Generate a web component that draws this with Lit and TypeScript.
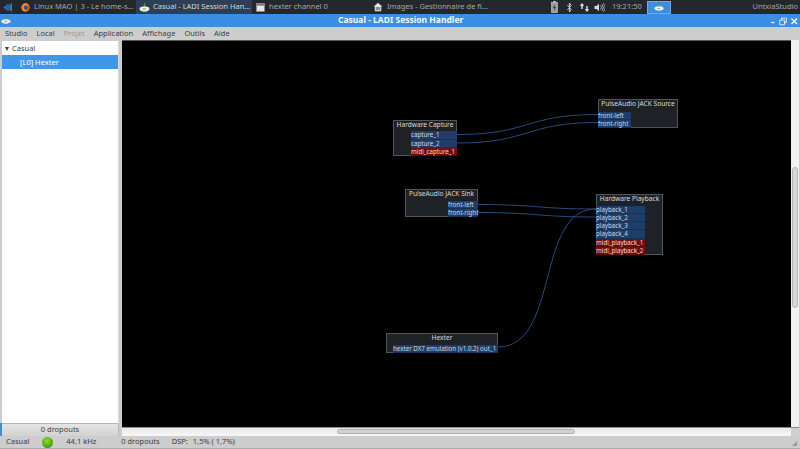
import { LitElement, html, css, svg } from "lit";
import { customElement } from "lit/decorators.js";

type Port = { name: string; midi?: boolean };
type Node = { title: string; x: number; y: number; w: number; h: number; pw: number; side: "l" | "r"; ports: Port[] };

const OX = 122, OY = 40;
const nodes: Node[] = [
  { title: "Hardware Capture", x: 393, y: 120, w: 64, h: 36, pw: 46, side: "r", ports: [{ name: "capture_1" }, { name: "capture_2" }, { name: "midi_capture_1", midi: true }] },
  { title: "PulseAudio JACK Source", x: 598, y: 99, w: 80, h: 29, pw: 33, side: "l", ports: [{ name: "front-left" }, { name: "front-right" }] },
  { title: "PulseAudio JACK Sink", x: 405, y: 189, w: 73, h: 28, pw: 30, side: "r", ports: [{ name: "front-left" }, { name: "front-right" }] },
  { title: "Hardware Playback", x: 596, y: 194, w: 67, h: 61, pw: 49, side: "l", ports: [{ name: "playback_1" }, { name: "playback_2" }, { name: "playback_3" }, { name: "playback_4" }, { name: "midi_playback_1", midi: true }, { name: "midi_playback_2", midi: true }] },
  { title: "Hexter", x: 386, y: 333, w: 112, h: 20, pw: 105, side: "r", ports: [{ name: "hexter DX7 emulation (v1.0.2) out_1" }] },
];

const wires = [
  "M457 134.5 C530 134.5 525 114.5 598 114.5",
  "M457 143 C530 143 525 122.5 598 122.5",
  "M478 204.5 C537 204.5 537 209 596 209",
  "M478 212.5 C537 212.5 537 217 596 217",
  "M498 347 C560 347 535 209 596 209",
];

const bowl = (s: number) => html`<svg class="ico" width=${s} height=${s} viewBox="0 0 12 12">
  <path d="M5.4 1h1.2v3H5.4z" fill="#3f9a35"/><path d="M3.5 5.2 6 3.4l2.5 1.8z" fill="#4fae3c"/>
  <ellipse cx="6" cy="7.6" rx="5.4" ry="2.6" fill="#f2f2ee"/><path d="M4 7.6h3.4" stroke="#4fae3c" stroke-width="1"/>
  <path d="M3.5 10h5" stroke="#cfcfcf"/></svg>`;

@customElement("app-root")
export class AppRoot extends LitElement {
  static styles = css`
    :host { display: flex; flex-direction: column; width: 800px; height: 449px; overflow: hidden; background: #cdcdcd;
      font-family: "Noto Sans", "Open Sans", sans-serif; font-size: 7.5px; color: #3c3c3c; line-height: 1; }
    .ico { display: block; flex: none; }
    .panel { height: 14px; flex: none; background: #24282c; color: #a4a7aa; display: flex; align-items: center; position: relative; }
    .logo { margin-left: 3px; width: 18px; }
    .task { display: flex; align-items: center; gap: 4px; height: 14px; white-space: nowrap; overflow: hidden; flex: none; box-sizing: border-box; }
    .t1 { width: 115px; }
    .t2 { width: 116px; background: #2c3f54; color: #d5d8da; padding-left: 3px; gap: 3px; }
    .t3 { width: 121px; padding-left: 4px; }
    .t4 { width: 178px; }
    .tray { display: flex; align-items: center; flex: none; }
    .clock { margin-left: 7px; width: 35px; }
    .show { width: 24px; height: 13px; background: #3d8ee3; border: 1px solid #7aa9d6; box-sizing: border-box; display: flex; align-items: center; justify-content: center; }
    .user { position: absolute; right: 2px; top: 3px; }
    .title { height: 13px; flex: none; background: #3b8ee5; color: #f4f8fc; font-size: 8.5px; font-weight: 700; display: flex; align-items: center; position: relative; padding-left: 338px; box-sizing: border-box; }
    .title .lead { position: absolute; left: 1px; top: 1px; }
    .btns { position: absolute; right: 1px; top: 3px; display: flex; gap: 3px; }
    .menu { height: 13px; flex: none; display: flex; align-items: center; gap: 9px; padding-left: 5px; background: #cdcdcd; }
    .menu .off { color: #9a9a9a; }
    .main { flex: 1; display: flex; min-height: 0; }
    .side { width: 122px; flex: none; display: flex; flex-direction: column; box-sizing: border-box; padding: 1px 3px 0 2px; position: relative; }
    .tree { flex: 1; background: #fff; border-right: 1px solid #d8d8d8; }
    .row { height: 14px; display: flex; align-items: center; color: #3a3a3a; padding-top: 1px; box-sizing: border-box; }
    .row.sel { background: #3f97ea; color: #fff; padding-left: 18px; }
    .arrow { width: 0; height: 0; border-left: 2.5px solid transparent; border-right: 2.5px solid transparent; border-top: 4px solid #444; margin: 0 3px 0 3px; }
    .drop { height: 13px; flex: none; background: linear-gradient(#e4e4e4, #d2d2d2); border: 1px solid #b8b8b8; border-bottom: 0; border-radius: 2px 2px 0 0; box-sizing: border-box; display: flex; align-items: center; justify-content: center; margin-left: -1px; }
    .bar { position: absolute; left: 0; bottom: 0; width: 2px; height: 13px; background: #3b8ee5; }
    .view { flex: 1; min-width: 0; display: flex; flex-direction: column; padding-right: 1px; }
    .mid { flex: 1; display: flex; min-height: 0; }
    .canvas { width: 669px; flex: none; background: #000; position: relative; overflow: hidden; border-top: 1px solid #5a5a5a; box-sizing: border-box; }
    .wires { position: absolute; left: 0; top: -1px; }
    .vs { flex: 1; background: #f1f1f1; position: relative; }
    .vthumb { position: absolute; left: 1px; right: 1px; top: 127px; height: 141px; background: #d6d6d6; border: 1px solid #b4b4b4; border-radius: 3px; box-sizing: border-box; }
    .hs { height: 9px; flex: none; background: linear-gradient(#e9e9e9, #f7f7f7); position: relative; border-top: 1px solid #8d8d8d; box-sizing: border-box; }
    .hthumb { position: absolute; left: 215px; top: 1px; width: 238px; height: 5px; background: #d2d2d2; border: 1px solid #aeaeae; border-radius: 3px; box-sizing: border-box; }
    .corner { position: absolute; right: 0; top: 0; width: 8px; height: 8px; background: #cfcfcf; }
    .status { height: 13px; flex: none; display: flex; align-items: center; position: relative; box-sizing: border-box; background: #cdcdcd; border-bottom: 1px solid #ababab; }
    .status span { flex: none; }
    .led { width: 11px; height: 11px; border-radius: 50%; background: radial-gradient(circle at 45% 35%, #8fdc2d, #3d9a10 75%); margin: 0 13px 0 13px; flex: none; }
    .grip { position: absolute; right: 3px; bottom: 2px; }
    .gn { position: absolute; box-sizing: border-box; background: #1e2226; border: 1px solid #50555a; color: #d8dadc; display: flex; flex-direction: column; font-size: 6.6px; }
    .gh { text-align: center; white-space: nowrap; flex: 1; line-height: 8px; }
    .ports { display: flex; flex-direction: column; flex: none; margin-bottom: -1px; }
    .ports.r { align-self: flex-end; margin-right: -1px; }
    .ports.l { align-self: flex-start; margin-left: -1px; }
    .port { height: 8.2px; background: #1f3d68; color: #cfd6e0; font-size: 6.2px; line-height: 8.6px; white-space: nowrap; border-bottom: 1px solid #173257; box-sizing: border-box; }
    .port.midi { background: #780d0d; border-bottom-color: #5e0808; color: #e9d8d8; }
  `;

  render() {
    return html`
      <div class="panel">
        <div class="logo"><svg class="ico" width="10" height="11" viewBox="0 0 10 11"><path d="M9 0.5 7.2 3 5 2 3 3.5 0.5 5.5 3 7.5 5 9 7.2 8 9 10.5z" fill="#2b78c9"/><path d="M4 3.5v4M6 2.5v6" stroke="#24282c" stroke-width=".7"/></svg></div>
        <div class="task t1">
          <svg class="ico" width="9" height="9" viewBox="0 0 10 10"><circle cx="5" cy="5" r="4.6" fill="#e8691c"/><circle cx="5.4" cy="5.2" r="2.6" fill="#3f4f8f"/><path d="M1 3c1-2 3-3 5-2.600C8 1 9 3 9 4 8 3 7 2.600 6 3 4 2.500 3 3.500 3 5c0 2 2 3 4 2.600C6 9.500 3 10 1.500 8 .5 6.500 .5 4.500 1 3z" fill="#f08a1d"/></svg>
          <span>Linux MAO | 3 - Le home-s...</span>
        </div>
        <div class="task t2">${bowl(11)}<span>Casual - LADI Session Han...</span></div>
        <div class="task t3">
          <svg class="ico" width="9" height="9" viewBox="0 0 9 9"><rect x=".5" y=".5" width="8" height="8" fill="#e6e6e6" stroke="#8a8a8a" stroke-width=".6"/><rect x="1" y="1" width="7" height="1.6" fill="#6f7378"/></svg>
          <span>hexter channel 0</span>
        </div>
        <div class="task t4">
          <svg class="ico" width="10" height="10" viewBox="0 0 10 10"><path d="M5 .8.6 4.600h1.200V9.200h6.400V4.600h1.200z" fill="#e9e9e9" stroke="#666" stroke-width=".5"/><rect x="3" y="5" width="4" height="3" fill="#8b8b8b"/></svg>
          <span>Images - Gestionnaire de fi...</span>
        </div>
        <div class="tray">
          <svg class="ico" width="7" height="12" viewBox="0 0 7 12"><rect x="2.200" y="0" width="2.600" height="1.500" fill="#c9c9c9"/><rect x=".5" y="1.500" width="6" height="10" fill="#9d9d9d" stroke="#d0d0d0" stroke-width=".6"/><path d="M3.800 3 2 6.800h1.400L2.900 10 5 6H3.500z" fill="#2b2b2b"/></svg>
          <svg class="ico" style="margin-left:9px" width="5" height="11" viewBox="0 0 5 11"><path d="M.4 3 4.300 7.500 2.400 10V1L4.300 3.500.4 8" fill="none" stroke="#d8d8d8" stroke-width=".9"/></svg>
          <svg class="ico" style="margin-left:7px" width="11" height="11" viewBox="0 0 11 11"><path d="M3 1 .8 3.800H2.300V7H3.700V3.800H5.200z" fill="#e8e8e8"/><path d="M8 10 5.800 7.200H7.300V4H8.700V7.200H10.200z" fill="#e8e8e8"/></svg>
          <svg class="ico" style="margin-left:4px" width="11" height="11" viewBox="0 0 11 11"><path d="M.5 4H2.500L5 1.800V9.200L2.500 7H.5z" fill="#d8d8d8"/><path d="M6.600 3.500a3 3 0 0 1 0 4M8 2.300a5 5 0 0 1 0 6.400M9.400 1.300a6.600 6.600 0 0 1 0 8.400" fill="none" stroke="#cfcfcf" stroke-width=".8"/></svg>
          <span class="clock">19:21:50</span>
          <div class="show">${bowl(10)}</div>
        </div>
        <span class="user">UntxiaStudio</span>
      </div>
      <div class="title">
        <span class="lead">${bowl(10)}</span>
        <span>Casual - LADI Session Handler</span>
        <div class="btns">
          <svg class="ico" width="6" height="9" viewBox="0 0 6 9"><path d="M1 5.500h3.500" stroke="#f2f6fb" stroke-width="1.200"/></svg>
          <svg class="ico" width="8" height="9" viewBox="0 0 8 9"><path d="M2.500 3V1.200h4.800V5.500H5.500M.7 3.200h4.800V7.700H.7z" fill="none" stroke="#e8eff8" stroke-width=".9"/></svg>
          <svg class="ico" width="9" height="9" viewBox="0 0 9 9"><path d="M1.500 1.500l5.500 5.500M7 1.500 1.500 7" stroke="#fff" stroke-width="1.400"/></svg>
        </div>
      </div>
      <div class="menu">
        <span>Studio</span><span>Local</span><span class="off">Projet</span><span>Application</span><span>Affichage</span><span>Outils</span><span>Aide</span>
      </div>
      <div class="main">
        <div class="side">
          <div class="tree">
            <div class="row"><span class="arrow"></span>Casual</div>
            <div class="row sel">[L0] Hexter</div>
          </div>
          <div class="drop">0 dropouts</div>
          <div class="bar"></div>
        </div>
        <div class="view">
          <div class="mid">
            <div class="canvas">
              <svg class="wires" width="669" height="387" viewBox="${OX} ${OY} 669 387">
                ${wires.map((d) => svg`<path d=${d} fill="none" stroke="#284c7c" stroke-width="1"/>`)}
              </svg>
              ${nodes.map((n) => html`
                <div class="gn" style="left:${n.x - OX}px;top:${n.y - OY - 1}px;width:${n.w}px;height:${n.h}px">
                  <div class="gh">${n.title}</div>
                  <div class="ports ${n.side}" style="width:${n.pw}px">
                    ${n.ports.map((p) => html`<div class="port ${p.midi ? "midi" : ""}">${p.name}</div>`)}
                  </div>
                </div>`)}
            </div>
            <div class="vs"><div class="vthumb"></div></div>
          </div>
          <div class="hs"><div class="hthumb"></div><div class="corner"></div></div>
        </div>
      </div>
      <div class="status">
        <span style="margin-left:6px">Casual</span>
        <div class="led"></div>
        <span>44,1 kHz</span>
        <span style="margin-left:25px">0 dropouts</span>
        <span style="margin-left:12px">DSP:</span>
        <span style="margin-left:5px">1,5% ( 1,7%)</span>
        <svg class="grip" width="5" height="5" viewBox="0 0 5 5"><path d="M5 0v5H0z" fill="#9b9b9b"/></svg>
      </div>
    `;
  }
}
